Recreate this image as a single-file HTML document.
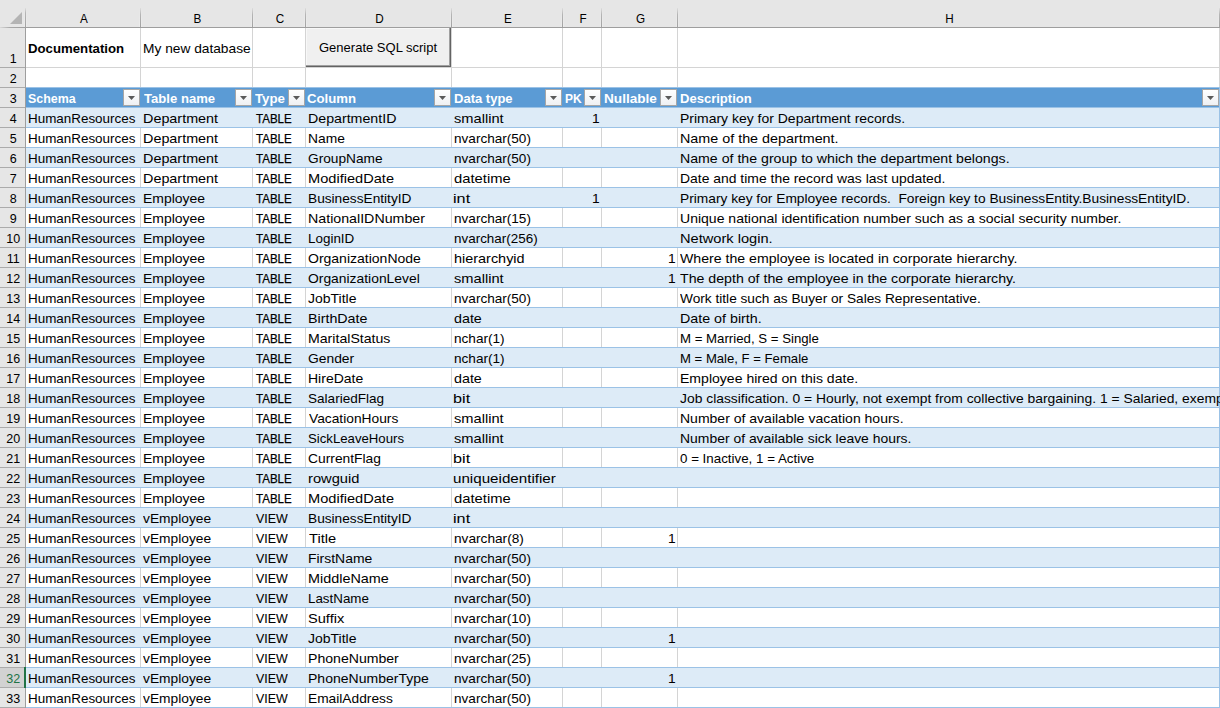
<!DOCTYPE html>
<html><head><meta charset="utf-8"><style>
html,body{margin:0;padding:0;}
body{width:1220px;height:708px;overflow:hidden;position:relative;background:#fff;font-family:"Liberation Sans",sans-serif;}
.a{position:absolute;}
.t{position:absolute;z-index:2;transform-origin:0 0;white-space:pre;font-size:13.6px;line-height:22px;color:#000;}
.b{font-weight:bold;}
.w{color:#fff;font-weight:bold;}
.rn{position:absolute;left:0;width:25px;text-align:center;transform:translateX(0.7px) scaleX(0.92);font-size:13.6px;line-height:24px;color:#000;}
.ch{position:absolute;top:0;height:27px;text-align:center;transform:translateX(1px) scaleX(0.86);font-size:13.6px;line-height:38px;color:#000;}
.fb{position:absolute;width:15px;height:15px;border:1px solid #a6a6a6;background:linear-gradient(#ffffff,#eef0f3);}
.fb svg{position:absolute;left:0;top:0;}
</style></head><body>

<div class="a" style="left:0;top:0;width:1220px;height:27px;background:#e6e6e6"></div>
<div class="a" style="left:26px;top:27px;width:1194px;height:1px;background:#9e9e9e"></div>
<div class="a" style="left:0;top:27px;width:25px;height:1px;background:linear-gradient(90deg,#d8d8d8,#a8a8a8 10px,#9e9e9e)"></div>
<div class="a" style="left:0;top:28px;width:25px;height:680px;background:#e6e6e6"></div>
<div class="a" style="left:24px;top:8px;width:3px;height:19px;background:linear-gradient(#e6e6e6,#ececec)"></div>
<div class="a" style="left:25px;top:8px;width:1px;height:700px;background:linear-gradient(#dedede,#b4b4b4 5px,#a2a2a2 19px,#9e9e9e 20px)"></div>
<svg class="a" style="left:0;top:0" width="25" height="27"><polygon points="22,12 22,24 10,24" fill="#b4b4b4"/></svg>
<div class="a" style="left:139px;top:8px;width:3px;height:19px;background:linear-gradient(#e6e6e6,#ececec)"></div>
<div class="a" style="left:140px;top:8px;width:1px;height:19px;background:linear-gradient(#dedede,#b4b4b4 35%,#a2a2a2)"></div>
<div class="a" style="left:251px;top:8px;width:3px;height:19px;background:linear-gradient(#e6e6e6,#ececec)"></div>
<div class="a" style="left:252px;top:8px;width:1px;height:19px;background:linear-gradient(#dedede,#b4b4b4 35%,#a2a2a2)"></div>
<div class="a" style="left:304px;top:8px;width:3px;height:19px;background:linear-gradient(#e6e6e6,#ececec)"></div>
<div class="a" style="left:305px;top:8px;width:1px;height:19px;background:linear-gradient(#dedede,#b4b4b4 35%,#a2a2a2)"></div>
<div class="a" style="left:450px;top:8px;width:3px;height:19px;background:linear-gradient(#e6e6e6,#ececec)"></div>
<div class="a" style="left:451px;top:8px;width:1px;height:19px;background:linear-gradient(#dedede,#b4b4b4 35%,#a2a2a2)"></div>
<div class="a" style="left:561px;top:8px;width:3px;height:19px;background:linear-gradient(#e6e6e6,#ececec)"></div>
<div class="a" style="left:562px;top:8px;width:1px;height:19px;background:linear-gradient(#dedede,#b4b4b4 35%,#a2a2a2)"></div>
<div class="a" style="left:600px;top:8px;width:3px;height:19px;background:linear-gradient(#e6e6e6,#ececec)"></div>
<div class="a" style="left:601px;top:8px;width:1px;height:19px;background:linear-gradient(#dedede,#b4b4b4 35%,#a2a2a2)"></div>
<div class="a" style="left:676px;top:8px;width:3px;height:19px;background:linear-gradient(#e6e6e6,#ececec)"></div>
<div class="a" style="left:677px;top:8px;width:1px;height:19px;background:linear-gradient(#dedede,#b4b4b4 35%,#a2a2a2)"></div>
<div class="a" style="left:1218px;top:8px;width:3px;height:19px;background:linear-gradient(#e6e6e6,#ececec)"></div>
<div class="a" style="left:1219px;top:8px;width:1px;height:19px;background:linear-gradient(#dedede,#b4b4b4 35%,#a2a2a2)"></div>
<div class="ch" style="left:26px;width:114px">A</div>
<div class="ch" style="left:141px;width:111px">B</div>
<div class="ch" style="left:253px;width:52px">C</div>
<div class="ch" style="left:306px;width:145px">D</div>
<div class="ch" style="left:452px;width:110px">E</div>
<div class="ch" style="left:563px;width:38px">F</div>
<div class="ch" style="left:602px;width:75px">G</div>
<div class="ch" style="left:678px;width:541px">H</div>
<div class="a" style="left:26px;top:67px;width:1194px;height:1px;background:#d4d4d4"></div>
<div class="a" style="left:26px;top:87px;width:1194px;height:1px;background:#d4d4d4"></div>
<div class="a" style="left:140px;top:28px;width:1px;height:680px;background:#d4d4d4"></div>
<div class="a" style="left:252px;top:28px;width:1px;height:680px;background:#d4d4d4"></div>
<div class="a" style="left:305px;top:28px;width:1px;height:680px;background:#d4d4d4"></div>
<div class="a" style="left:451px;top:28px;width:1px;height:680px;background:#d4d4d4"></div>
<div class="a" style="left:562px;top:28px;width:1px;height:680px;background:#d4d4d4"></div>
<div class="a" style="left:601px;top:28px;width:1px;height:680px;background:#d4d4d4"></div>
<div class="a" style="left:677px;top:28px;width:1px;height:680px;background:#d4d4d4"></div>
<div class="a" style="left:1219px;top:28px;width:1px;height:680px;background:#d4d4d4"></div>
<div class="a" style="left:1219px;top:87px;width:1px;height:621px;background:#9bc2e6;z-index:1"></div>
<div class="a" style="left:0;top:67px;width:25px;height:1px;background:#ababab"></div>
<div class="a" style="left:0;top:87px;width:25px;height:1px;background:#ababab"></div>
<div class="a" style="left:0;top:107px;width:25px;height:1px;background:#ababab"></div>
<div class="a" style="left:0;top:127px;width:25px;height:1px;background:#ababab"></div>
<div class="a" style="left:0;top:147px;width:25px;height:1px;background:#ababab"></div>
<div class="a" style="left:0;top:167px;width:25px;height:1px;background:#ababab"></div>
<div class="a" style="left:0;top:187px;width:25px;height:1px;background:#ababab"></div>
<div class="a" style="left:0;top:207px;width:25px;height:1px;background:#ababab"></div>
<div class="a" style="left:0;top:227px;width:25px;height:1px;background:#ababab"></div>
<div class="a" style="left:0;top:247px;width:25px;height:1px;background:#ababab"></div>
<div class="a" style="left:0;top:267px;width:25px;height:1px;background:#ababab"></div>
<div class="a" style="left:0;top:287px;width:25px;height:1px;background:#ababab"></div>
<div class="a" style="left:0;top:307px;width:25px;height:1px;background:#ababab"></div>
<div class="a" style="left:0;top:327px;width:25px;height:1px;background:#ababab"></div>
<div class="a" style="left:0;top:347px;width:25px;height:1px;background:#ababab"></div>
<div class="a" style="left:0;top:367px;width:25px;height:1px;background:#ababab"></div>
<div class="a" style="left:0;top:387px;width:25px;height:1px;background:#ababab"></div>
<div class="a" style="left:0;top:407px;width:25px;height:1px;background:#ababab"></div>
<div class="a" style="left:0;top:427px;width:25px;height:1px;background:#ababab"></div>
<div class="a" style="left:0;top:447px;width:25px;height:1px;background:#ababab"></div>
<div class="a" style="left:0;top:467px;width:25px;height:1px;background:#ababab"></div>
<div class="a" style="left:0;top:487px;width:25px;height:1px;background:#ababab"></div>
<div class="a" style="left:0;top:507px;width:25px;height:1px;background:#ababab"></div>
<div class="a" style="left:0;top:527px;width:25px;height:1px;background:#ababab"></div>
<div class="a" style="left:0;top:547px;width:25px;height:1px;background:#ababab"></div>
<div class="a" style="left:0;top:567px;width:25px;height:1px;background:#ababab"></div>
<div class="a" style="left:0;top:587px;width:25px;height:1px;background:#ababab"></div>
<div class="a" style="left:0;top:607px;width:25px;height:1px;background:#ababab"></div>
<div class="a" style="left:0;top:627px;width:25px;height:1px;background:#ababab"></div>
<div class="a" style="left:0;top:647px;width:25px;height:1px;background:#ababab"></div>
<div class="a" style="left:0;top:667px;width:25px;height:1px;background:#ababab"></div>
<div class="a" style="left:0;top:687px;width:25px;height:1px;background:#ababab"></div>
<div class="a" style="left:0;top:707px;width:25px;height:1px;background:#ababab"></div>
<div class="a" style="left:26px;top:87px;width:1194px;height:1px;background:#9bc2e6"></div>
<div class="a" style="left:26px;top:88px;width:1193px;height:19px;background:#5b9bd5"></div>
<div class="a" style="left:26px;top:108px;width:1193px;height:19px;background:#ddebf7"></div>
<div class="a" style="left:26px;top:107px;width:1194px;height:1px;background:#9bc2e6"></div>
<div class="a" style="left:26px;top:127px;width:1194px;height:1px;background:#9bc2e6"></div>
<div class="a" style="left:26px;top:148px;width:1193px;height:19px;background:#ddebf7"></div>
<div class="a" style="left:26px;top:147px;width:1194px;height:1px;background:#9bc2e6"></div>
<div class="a" style="left:26px;top:167px;width:1194px;height:1px;background:#9bc2e6"></div>
<div class="a" style="left:26px;top:188px;width:1193px;height:19px;background:#ddebf7"></div>
<div class="a" style="left:26px;top:187px;width:1194px;height:1px;background:#9bc2e6"></div>
<div class="a" style="left:26px;top:207px;width:1194px;height:1px;background:#9bc2e6"></div>
<div class="a" style="left:26px;top:228px;width:1193px;height:19px;background:#ddebf7"></div>
<div class="a" style="left:26px;top:227px;width:1194px;height:1px;background:#9bc2e6"></div>
<div class="a" style="left:26px;top:247px;width:1194px;height:1px;background:#9bc2e6"></div>
<div class="a" style="left:26px;top:268px;width:1193px;height:19px;background:#ddebf7"></div>
<div class="a" style="left:26px;top:267px;width:1194px;height:1px;background:#9bc2e6"></div>
<div class="a" style="left:26px;top:287px;width:1194px;height:1px;background:#9bc2e6"></div>
<div class="a" style="left:26px;top:308px;width:1193px;height:19px;background:#ddebf7"></div>
<div class="a" style="left:26px;top:307px;width:1194px;height:1px;background:#9bc2e6"></div>
<div class="a" style="left:26px;top:327px;width:1194px;height:1px;background:#9bc2e6"></div>
<div class="a" style="left:26px;top:348px;width:1193px;height:19px;background:#ddebf7"></div>
<div class="a" style="left:26px;top:347px;width:1194px;height:1px;background:#9bc2e6"></div>
<div class="a" style="left:26px;top:367px;width:1194px;height:1px;background:#9bc2e6"></div>
<div class="a" style="left:26px;top:388px;width:1193px;height:19px;background:#ddebf7"></div>
<div class="a" style="left:26px;top:387px;width:1194px;height:1px;background:#9bc2e6"></div>
<div class="a" style="left:26px;top:407px;width:1194px;height:1px;background:#9bc2e6"></div>
<div class="a" style="left:26px;top:428px;width:1193px;height:19px;background:#ddebf7"></div>
<div class="a" style="left:26px;top:427px;width:1194px;height:1px;background:#9bc2e6"></div>
<div class="a" style="left:26px;top:447px;width:1194px;height:1px;background:#9bc2e6"></div>
<div class="a" style="left:26px;top:468px;width:1193px;height:19px;background:#ddebf7"></div>
<div class="a" style="left:26px;top:467px;width:1194px;height:1px;background:#9bc2e6"></div>
<div class="a" style="left:26px;top:487px;width:1194px;height:1px;background:#9bc2e6"></div>
<div class="a" style="left:26px;top:508px;width:1193px;height:19px;background:#ddebf7"></div>
<div class="a" style="left:26px;top:507px;width:1194px;height:1px;background:#9bc2e6"></div>
<div class="a" style="left:26px;top:527px;width:1194px;height:1px;background:#9bc2e6"></div>
<div class="a" style="left:26px;top:548px;width:1193px;height:19px;background:#ddebf7"></div>
<div class="a" style="left:26px;top:547px;width:1194px;height:1px;background:#9bc2e6"></div>
<div class="a" style="left:26px;top:567px;width:1194px;height:1px;background:#9bc2e6"></div>
<div class="a" style="left:26px;top:588px;width:1193px;height:19px;background:#ddebf7"></div>
<div class="a" style="left:26px;top:587px;width:1194px;height:1px;background:#9bc2e6"></div>
<div class="a" style="left:26px;top:607px;width:1194px;height:1px;background:#9bc2e6"></div>
<div class="a" style="left:26px;top:628px;width:1193px;height:19px;background:#ddebf7"></div>
<div class="a" style="left:26px;top:627px;width:1194px;height:1px;background:#9bc2e6"></div>
<div class="a" style="left:26px;top:647px;width:1194px;height:1px;background:#9bc2e6"></div>
<div class="a" style="left:26px;top:668px;width:1193px;height:19px;background:#ddebf7"></div>
<div class="a" style="left:26px;top:667px;width:1194px;height:1px;background:#9bc2e6"></div>
<div class="a" style="left:26px;top:687px;width:1194px;height:1px;background:#9bc2e6"></div>
<div class="a" style="left:26px;top:707px;width:1194px;height:1px;background:#9bc2e6"></div>
<div class="a" style="left:0;top:668px;width:25px;height:19px;background:#d2d2d2"></div>
<div class="a" style="left:24px;top:667px;width:2px;height:21px;background:#217346"></div>
<div class="rn" style="top:47px;color:#000">1</div>
<div class="rn" style="top:67px;color:#000">2</div>
<div class="rn" style="top:87px;color:#000">3</div>
<div class="rn" style="top:107px;color:#000">4</div>
<div class="rn" style="top:127px;color:#000">5</div>
<div class="rn" style="top:147px;color:#000">6</div>
<div class="rn" style="top:167px;color:#000">7</div>
<div class="rn" style="top:187px;color:#000">8</div>
<div class="rn" style="top:207px;color:#000">9</div>
<div class="rn" style="top:227px;color:#000">10</div>
<div class="rn" style="top:247px;color:#000">11</div>
<div class="rn" style="top:267px;color:#000">12</div>
<div class="rn" style="top:287px;color:#000">13</div>
<div class="rn" style="top:307px;color:#000">14</div>
<div class="rn" style="top:327px;color:#000">15</div>
<div class="rn" style="top:347px;color:#000">16</div>
<div class="rn" style="top:367px;color:#000">17</div>
<div class="rn" style="top:387px;color:#000">18</div>
<div class="rn" style="top:407px;color:#000">19</div>
<div class="rn" style="top:427px;color:#000">20</div>
<div class="rn" style="top:447px;color:#000">21</div>
<div class="rn" style="top:467px;color:#000">22</div>
<div class="rn" style="top:487px;color:#000">23</div>
<div class="rn" style="top:507px;color:#000">24</div>
<div class="rn" style="top:527px;color:#000">25</div>
<div class="rn" style="top:547px;color:#000">26</div>
<div class="rn" style="top:567px;color:#000">27</div>
<div class="rn" style="top:587px;color:#000">28</div>
<div class="rn" style="top:607px;color:#000">29</div>
<div class="rn" style="top:627px;color:#000">30</div>
<div class="rn" style="top:647px;color:#000">31</div>
<div class="rn" style="top:667px;color:#217346">32</div>
<div class="rn" style="top:687px;color:#000">33</div>
<div class="t b" style="left:28.09px;top:38px;transform:scaleX(0.9714);">Documentation</div>
<div class="t" style="left:142.66px;top:38px;transform:scaleX(1.0104);">My new database</div>
<div class="a" style="left:306px;top:28px;width:145px;height:39px;background:#f0f0f0;box-shadow:inset -1px -1px 0 #636363, inset -2px -2px 0 #a0a0a0, inset 1px 1px 0 #f8f8f8"></div>
<div class="t" style="left:318.82px;top:37px;transform:scaleX(0.9568);">Generate SQL script</div>
<div class="t w b" style="left:27.81px;top:88px;transform:scaleX(0.9147);">Schema</div>
<div class="fb" style="left:123px;top:89px"><svg width="15" height="15"><polygon points="4,6 11,6 7.5,10" fill="#5a5a5a"/></svg></div>
<div class="t w b" style="left:143.96px;top:88px;transform:scaleX(0.9642);">Table name</div>
<div class="fb" style="left:235px;top:89px"><svg width="15" height="15"><polygon points="4,6 11,6 7.5,10" fill="#5a5a5a"/></svg></div>
<div class="t w b" style="left:255.36px;top:88px;transform:scaleX(0.9761);">Type</div>
<div class="fb" style="left:288px;top:89px"><svg width="15" height="15"><polygon points="4,6 11,6 7.5,10" fill="#5a5a5a"/></svg></div>
<div class="t w b" style="left:307.21px;top:88px;transform:scaleX(0.9707);">Column</div>
<div class="fb" style="left:434px;top:89px"><svg width="15" height="15"><polygon points="4,6 11,6 7.5,10" fill="#5a5a5a"/></svg></div>
<div class="t w b" style="left:453.80px;top:88px;transform:scaleX(0.9579);">Data type</div>
<div class="fb" style="left:545px;top:89px"><svg width="15" height="15"><polygon points="4,6 11,6 7.5,10" fill="#5a5a5a"/></svg></div>
<div class="t w b" style="left:564.77px;top:88px;transform:scaleX(0.8830);">PK</div>
<div class="fb" style="left:584px;top:89px"><svg width="15" height="15"><polygon points="4,6 11,6 7.5,10" fill="#5a5a5a"/></svg></div>
<div class="t w b" style="left:604.07px;top:88px;transform:scaleX(1.0013);">Nullable</div>
<div class="fb" style="left:660px;top:89px"><svg width="15" height="15"><polygon points="4,6 11,6 7.5,10" fill="#5a5a5a"/></svg></div>
<div class="t w b" style="left:679.90px;top:88px;transform:scaleX(0.9588);">Description</div>
<div class="fb" style="left:1202px;top:89px"><svg width="15" height="15"><polygon points="4,6 11,6 7.5,10" fill="#5a5a5a"/></svg></div>
<div class="t" style="left:27.98px;top:108px;transform:scaleX(0.9870);">HumanResources</div>
<div class="t" style="left:142.61px;top:108px;transform:scaleX(1.0575);">Department</div>
<div class="t" style="left:256.31px;top:108px;transform:scaleX(0.8495);-webkit-text-stroke:0.25px currentColor;">TABLE</div>
<div class="t" style="left:307.52px;top:108px;transform:scaleX(1.0447);">DepartmentID</div>
<div class="t" style="left:453.72px;top:108px;transform:scaleX(1.0777);">smallint</div>
<div class="t" style="left:592.48px;top:108px;transform:scaleX(1.0155);">1</div>
<div class="t" style="left:27.98px;top:128px;transform:scaleX(0.9870);">HumanResources</div>
<div class="t" style="left:142.61px;top:128px;transform:scaleX(1.0575);">Department</div>
<div class="t" style="left:256.31px;top:128px;transform:scaleX(0.8495);-webkit-text-stroke:0.25px currentColor;">TABLE</div>
<div class="t" style="left:307.55px;top:128px;transform:scaleX(1.0169);">Name</div>
<div class="t" style="left:453.55px;top:128px;transform:scaleX(0.9984);">nvarchar(50)</div>
<div class="t" style="left:27.98px;top:148px;transform:scaleX(0.9870);">HumanResources</div>
<div class="t" style="left:142.61px;top:148px;transform:scaleX(1.0575);">Department</div>
<div class="t" style="left:256.31px;top:148px;transform:scaleX(0.8495);-webkit-text-stroke:0.25px currentColor;">TABLE</div>
<div class="t" style="left:307.78px;top:148px;transform:scaleX(1.0083);">GroupName</div>
<div class="t" style="left:453.55px;top:148px;transform:scaleX(0.9984);">nvarchar(50)</div>
<div class="t" style="left:27.98px;top:168px;transform:scaleX(0.9870);">HumanResources</div>
<div class="t" style="left:142.61px;top:168px;transform:scaleX(1.0575);">Department</div>
<div class="t" style="left:256.31px;top:168px;transform:scaleX(0.8495);-webkit-text-stroke:0.25px currentColor;">TABLE</div>
<div class="t" style="left:307.50px;top:168px;transform:scaleX(1.0737);">ModifiedDate</div>
<div class="t" style="left:453.71px;top:168px;transform:scaleX(1.0880);">datetime</div>
<div class="t" style="left:27.98px;top:188px;transform:scaleX(0.9870);">HumanResources</div>
<div class="t" style="left:142.64px;top:188px;transform:scaleX(1.0269);">Employee</div>
<div class="t" style="left:256.31px;top:188px;transform:scaleX(0.8495);-webkit-text-stroke:0.25px currentColor;">TABLE</div>
<div class="t" style="left:307.56px;top:188px;transform:scaleX(1.0065);">BusinessEntityID</div>
<div class="t" style="left:453.41px;top:188px;transform:scaleX(1.1937);">int</div>
<div class="t" style="left:592.48px;top:188px;transform:scaleX(1.0155);">1</div>
<div class="t" style="left:27.98px;top:208px;transform:scaleX(0.9870);">HumanResources</div>
<div class="t" style="left:142.64px;top:208px;transform:scaleX(1.0269);">Employee</div>
<div class="t" style="left:256.31px;top:208px;transform:scaleX(0.8495);-webkit-text-stroke:0.25px currentColor;">TABLE</div>
<div class="t" style="left:307.52px;top:208px;transform:scaleX(1.0460);">NationalIDNumber</div>
<div class="t" style="left:453.55px;top:208px;transform:scaleX(0.9984);">nvarchar(15)</div>
<div class="t" style="left:27.98px;top:228px;transform:scaleX(0.9870);">HumanResources</div>
<div class="t" style="left:142.64px;top:228px;transform:scaleX(1.0269);">Employee</div>
<div class="t" style="left:256.31px;top:228px;transform:scaleX(0.8495);-webkit-text-stroke:0.25px currentColor;">TABLE</div>
<div class="t" style="left:307.58px;top:228px;transform:scaleX(0.9881);">LoginID</div>
<div class="t" style="left:453.56px;top:228px;transform:scaleX(0.9883);">nvarchar(256)</div>
<div class="t" style="left:27.98px;top:248px;transform:scaleX(0.9870);">HumanResources</div>
<div class="t" style="left:142.64px;top:248px;transform:scaleX(1.0269);">Employee</div>
<div class="t" style="left:256.31px;top:248px;transform:scaleX(0.8495);-webkit-text-stroke:0.25px currentColor;">TABLE</div>
<div class="t" style="left:307.80px;top:248px;transform:scaleX(1.0299);">OrganizationNode</div>
<div class="t" style="left:453.50px;top:248px;transform:scaleX(1.0617);">hierarchyid</div>
<div class="t" style="left:668.18px;top:248px;transform:scaleX(1.0155);">1</div>
<div class="t" style="left:27.98px;top:268px;transform:scaleX(0.9870);">HumanResources</div>
<div class="t" style="left:142.64px;top:268px;transform:scaleX(1.0269);">Employee</div>
<div class="t" style="left:256.31px;top:268px;transform:scaleX(0.8495);-webkit-text-stroke:0.25px currentColor;">TABLE</div>
<div class="t" style="left:307.80px;top:268px;transform:scaleX(1.0199);">OrganizationLevel</div>
<div class="t" style="left:453.72px;top:268px;transform:scaleX(1.0777);">smallint</div>
<div class="t" style="left:668.18px;top:268px;transform:scaleX(1.0155);">1</div>
<div class="t" style="left:27.98px;top:288px;transform:scaleX(0.9870);">HumanResources</div>
<div class="t" style="left:142.64px;top:288px;transform:scaleX(1.0269);">Employee</div>
<div class="t" style="left:256.31px;top:288px;transform:scaleX(0.8495);-webkit-text-stroke:0.25px currentColor;">TABLE</div>
<div class="t" style="left:307.96px;top:288px;transform:scaleX(1.0284);">JobTitle</div>
<div class="t" style="left:453.55px;top:288px;transform:scaleX(0.9984);">nvarchar(50)</div>
<div class="t" style="left:27.98px;top:308px;transform:scaleX(0.9870);">HumanResources</div>
<div class="t" style="left:142.64px;top:308px;transform:scaleX(1.0269);">Employee</div>
<div class="t" style="left:256.31px;top:308px;transform:scaleX(0.8495);-webkit-text-stroke:0.25px currentColor;">TABLE</div>
<div class="t" style="left:307.52px;top:308px;transform:scaleX(1.0488);">BirthDate</div>
<div class="t" style="left:453.74px;top:308px;transform:scaleX(1.0506);">date</div>
<div class="t" style="left:27.98px;top:328px;transform:scaleX(0.9870);">HumanResources</div>
<div class="t" style="left:142.64px;top:328px;transform:scaleX(1.0269);">Employee</div>
<div class="t" style="left:256.31px;top:328px;transform:scaleX(0.8495);-webkit-text-stroke:0.25px currentColor;">TABLE</div>
<div class="t" style="left:307.53px;top:328px;transform:scaleX(1.0392);">MaritalStatus</div>
<div class="t" style="left:453.55px;top:328px;transform:scaleX(1.0005);">nchar(1)</div>
<div class="t" style="left:27.98px;top:348px;transform:scaleX(0.9870);">HumanResources</div>
<div class="t" style="left:142.64px;top:348px;transform:scaleX(1.0269);">Employee</div>
<div class="t" style="left:256.31px;top:348px;transform:scaleX(0.8495);-webkit-text-stroke:0.25px currentColor;">TABLE</div>
<div class="t" style="left:307.77px;top:348px;transform:scaleX(1.0186);">Gender</div>
<div class="t" style="left:453.55px;top:348px;transform:scaleX(1.0005);">nchar(1)</div>
<div class="t" style="left:27.98px;top:368px;transform:scaleX(0.9870);">HumanResources</div>
<div class="t" style="left:142.64px;top:368px;transform:scaleX(1.0269);">Employee</div>
<div class="t" style="left:256.31px;top:368px;transform:scaleX(0.8495);-webkit-text-stroke:0.25px currentColor;">TABLE</div>
<div class="t" style="left:307.54px;top:368px;transform:scaleX(1.0305);">HireDate</div>
<div class="t" style="left:453.74px;top:368px;transform:scaleX(1.0506);">date</div>
<div class="t" style="left:27.98px;top:388px;transform:scaleX(0.9870);">HumanResources</div>
<div class="t" style="left:142.64px;top:388px;transform:scaleX(1.0269);">Employee</div>
<div class="t" style="left:256.31px;top:388px;transform:scaleX(0.8495);-webkit-text-stroke:0.25px currentColor;">TABLE</div>
<div class="t" style="left:307.65px;top:388px;transform:scaleX(0.9970);">SalariedFlag</div>
<div class="t" style="left:453.41px;top:388px;transform:scaleX(1.1937);">bit</div>
<div class="t" style="left:27.98px;top:408px;transform:scaleX(0.9870);">HumanResources</div>
<div class="t" style="left:142.64px;top:408px;transform:scaleX(1.0269);">Employee</div>
<div class="t" style="left:256.31px;top:408px;transform:scaleX(0.8495);-webkit-text-stroke:0.25px currentColor;">TABLE</div>
<div class="t" style="left:308.54px;top:408px;transform:scaleX(1.0131);">VacationHours</div>
<div class="t" style="left:453.72px;top:408px;transform:scaleX(1.0777);">smallint</div>
<div class="t" style="left:27.98px;top:428px;transform:scaleX(0.9870);">HumanResources</div>
<div class="t" style="left:142.64px;top:428px;transform:scaleX(1.0269);">Employee</div>
<div class="t" style="left:256.31px;top:428px;transform:scaleX(0.8495);-webkit-text-stroke:0.25px currentColor;">TABLE</div>
<div class="t" style="left:307.67px;top:428px;transform:scaleX(0.9699);">SickLeaveHours</div>
<div class="t" style="left:453.72px;top:428px;transform:scaleX(1.0777);">smallint</div>
<div class="t" style="left:27.98px;top:448px;transform:scaleX(0.9870);">HumanResources</div>
<div class="t" style="left:142.64px;top:448px;transform:scaleX(1.0269);">Employee</div>
<div class="t" style="left:256.31px;top:448px;transform:scaleX(0.8495);-webkit-text-stroke:0.25px currentColor;">TABLE</div>
<div class="t" style="left:307.77px;top:448px;transform:scaleX(1.0169);">CurrentFlag</div>
<div class="t" style="left:453.41px;top:448px;transform:scaleX(1.1937);">bit</div>
<div class="t" style="left:27.98px;top:468px;transform:scaleX(0.9870);">HumanResources</div>
<div class="t" style="left:142.64px;top:468px;transform:scaleX(1.0269);">Employee</div>
<div class="t" style="left:256.31px;top:468px;transform:scaleX(0.8495);-webkit-text-stroke:0.25px currentColor;">TABLE</div>
<div class="t" style="left:307.58px;top:468px;transform:scaleX(1.0806);">rowguid</div>
<div class="t" style="left:453.48px;top:468px;transform:scaleX(1.1154);">uniqueidentifier</div>
<div class="t" style="left:27.98px;top:488px;transform:scaleX(0.9870);">HumanResources</div>
<div class="t" style="left:142.64px;top:488px;transform:scaleX(1.0269);">Employee</div>
<div class="t" style="left:256.31px;top:488px;transform:scaleX(0.8495);-webkit-text-stroke:0.25px currentColor;">TABLE</div>
<div class="t" style="left:307.50px;top:488px;transform:scaleX(1.0737);">ModifiedDate</div>
<div class="t" style="left:453.71px;top:488px;transform:scaleX(1.0880);">datetime</div>
<div class="t" style="left:27.98px;top:508px;transform:scaleX(0.9870);">HumanResources</div>
<div class="t" style="left:143.24px;top:508px;transform:scaleX(1.0137);">vEmployee</div>
<div class="t" style="left:255.83px;top:508px;transform:scaleX(0.9126);-webkit-text-stroke:0.09px currentColor;">VIEW</div>
<div class="t" style="left:307.56px;top:508px;transform:scaleX(1.0065);">BusinessEntityID</div>
<div class="t" style="left:453.41px;top:508px;transform:scaleX(1.1937);">int</div>
<div class="t" style="left:27.98px;top:528px;transform:scaleX(0.9870);">HumanResources</div>
<div class="t" style="left:143.24px;top:528px;transform:scaleX(1.0137);">vEmployee</div>
<div class="t" style="left:255.83px;top:528px;transform:scaleX(0.9126);-webkit-text-stroke:0.09px currentColor;">VIEW</div>
<div class="t" style="left:308.52px;top:528px;transform:scaleX(1.0790);">Title</div>
<div class="t" style="left:453.54px;top:528px;transform:scaleX(1.0047);">nvarchar(8)</div>
<div class="t" style="left:668.18px;top:528px;transform:scaleX(1.0155);">1</div>
<div class="t" style="left:27.98px;top:548px;transform:scaleX(0.9870);">HumanResources</div>
<div class="t" style="left:143.24px;top:548px;transform:scaleX(1.0137);">vEmployee</div>
<div class="t" style="left:255.83px;top:548px;transform:scaleX(0.9126);-webkit-text-stroke:0.09px currentColor;">VIEW</div>
<div class="t" style="left:307.54px;top:548px;transform:scaleX(1.0251);">FirstName</div>
<div class="t" style="left:453.55px;top:548px;transform:scaleX(0.9984);">nvarchar(50)</div>
<div class="t" style="left:27.98px;top:568px;transform:scaleX(0.9870);">HumanResources</div>
<div class="t" style="left:143.24px;top:568px;transform:scaleX(1.0137);">vEmployee</div>
<div class="t" style="left:255.83px;top:568px;transform:scaleX(0.9126);-webkit-text-stroke:0.09px currentColor;">VIEW</div>
<div class="t" style="left:307.51px;top:568px;transform:scaleX(1.0598);">MiddleName</div>
<div class="t" style="left:453.55px;top:568px;transform:scaleX(0.9984);">nvarchar(50)</div>
<div class="t" style="left:27.98px;top:588px;transform:scaleX(0.9870);">HumanResources</div>
<div class="t" style="left:143.24px;top:588px;transform:scaleX(1.0137);">vEmployee</div>
<div class="t" style="left:255.83px;top:588px;transform:scaleX(0.9126);-webkit-text-stroke:0.09px currentColor;">VIEW</div>
<div class="t" style="left:307.58px;top:588px;transform:scaleX(0.9824);">LastName</div>
<div class="t" style="left:453.55px;top:588px;transform:scaleX(0.9984);">nvarchar(50)</div>
<div class="t" style="left:27.98px;top:608px;transform:scaleX(0.9870);">HumanResources</div>
<div class="t" style="left:143.24px;top:608px;transform:scaleX(1.0137);">vEmployee</div>
<div class="t" style="left:255.83px;top:608px;transform:scaleX(0.9126);-webkit-text-stroke:0.09px currentColor;">VIEW</div>
<div class="t" style="left:307.58px;top:608px;transform:scaleX(1.0729);">Suffix</div>
<div class="t" style="left:453.55px;top:608px;transform:scaleX(0.9984);">nvarchar(10)</div>
<div class="t" style="left:27.98px;top:628px;transform:scaleX(0.9870);">HumanResources</div>
<div class="t" style="left:143.24px;top:628px;transform:scaleX(1.0137);">vEmployee</div>
<div class="t" style="left:255.83px;top:628px;transform:scaleX(0.9126);-webkit-text-stroke:0.09px currentColor;">VIEW</div>
<div class="t" style="left:307.96px;top:628px;transform:scaleX(1.0284);">JobTitle</div>
<div class="t" style="left:453.55px;top:628px;transform:scaleX(0.9984);">nvarchar(50)</div>
<div class="t" style="left:668.18px;top:628px;transform:scaleX(1.0155);">1</div>
<div class="t" style="left:27.98px;top:648px;transform:scaleX(0.9870);">HumanResources</div>
<div class="t" style="left:143.24px;top:648px;transform:scaleX(1.0137);">vEmployee</div>
<div class="t" style="left:255.83px;top:648px;transform:scaleX(0.9126);-webkit-text-stroke:0.09px currentColor;">VIEW</div>
<div class="t" style="left:307.53px;top:648px;transform:scaleX(1.0358);">PhoneNumber</div>
<div class="t" style="left:453.55px;top:648px;transform:scaleX(0.9984);">nvarchar(25)</div>
<div class="t" style="left:27.98px;top:668px;transform:scaleX(0.9870);">HumanResources</div>
<div class="t" style="left:143.24px;top:668px;transform:scaleX(1.0137);">vEmployee</div>
<div class="t" style="left:255.83px;top:668px;transform:scaleX(0.9126);-webkit-text-stroke:0.09px currentColor;">VIEW</div>
<div class="t" style="left:307.54px;top:668px;transform:scaleX(1.0321);">PhoneNumberType</div>
<div class="t" style="left:453.55px;top:668px;transform:scaleX(0.9984);">nvarchar(50)</div>
<div class="t" style="left:668.18px;top:668px;transform:scaleX(1.0155);">1</div>
<div class="t" style="left:27.98px;top:688px;transform:scaleX(0.9870);">HumanResources</div>
<div class="t" style="left:143.24px;top:688px;transform:scaleX(1.0137);">vEmployee</div>
<div class="t" style="left:255.83px;top:688px;transform:scaleX(0.9126);-webkit-text-stroke:0.09px currentColor;">VIEW</div>
<div class="t" style="left:307.56px;top:688px;transform:scaleX(1.0109);">EmailAddress</div>
<div class="t" style="left:453.55px;top:688px;transform:scaleX(0.9984);">nvarchar(50)</div>
<div class="a" style="left:678px;top:0;width:542px;height:708px;overflow:hidden">
<div class="t" style="left:1.84px;top:108px;transform:scaleX(1.0274)">Primary key for Department records.</div>
<div class="t" style="left:1.82px;top:128px;transform:scaleX(1.0543)">Name of the department.</div>
<div class="t" style="left:1.83px;top:148px;transform:scaleX(1.0409)">Name of the group to which the department belongs.</div>
<div class="t" style="left:1.84px;top:168px;transform:scaleX(1.0239)">Date and time the record was last updated.</div>
<div class="t" style="left:1.86px;top:188px;transform:scaleX(1.0112)">Primary key for Employee records.&nbsp; Foreign key to BusinessEntity.BusinessEntityID.</div>
<div class="t" style="left:1.86px;top:208px;transform:scaleX(1.0319)">Unique national identification number such as a social security number.</div>
<div class="t" style="left:1.80px;top:228px;transform:scaleX(1.0756)">Network login.</div>
<div class="t" style="left:2.14px;top:248px;transform:scaleX(1.0392)">Where the employee is located in corporate hierarchy.</div>
<div class="t" style="left:2.12px;top:268px;transform:scaleX(1.0423)">The depth of the employee in the corporate hierarchy.</div>
<div class="t" style="left:2.14px;top:288px;transform:scaleX(1.0060)">Work title such as Buyer or Sales Representative.</div>
<div class="t" style="left:1.82px;top:308px;transform:scaleX(1.0501)">Date of birth.</div>
<div class="t" style="left:1.89px;top:328px;transform:scaleX(0.9727)">M = Married, S = Single</div>
<div class="t" style="left:1.90px;top:348px;transform:scaleX(0.9654)">M = Male, F = Female</div>
<div class="t" style="left:1.84px;top:368px;transform:scaleX(1.0338)">Employee hired on this date.</div>
<div class="t" style="left:2.26px;top:388px;transform:scaleX(1.0196)">Job classification. 0 = Hourly, not exempt from collective bargaining. 1 = Salaried, exempt from collective bargaining.</div>
<div class="t" style="left:1.84px;top:408px;transform:scaleX(1.0307)">Number of available vacation hours.</div>
<div class="t" style="left:1.84px;top:428px;transform:scaleX(1.0244)">Number of available sick leave hours.</div>
<div class="t" style="left:2.23px;top:448px;transform:scaleX(0.9814)">0 = Inactive, 1 = Active</div>
</div>
</body></html>
